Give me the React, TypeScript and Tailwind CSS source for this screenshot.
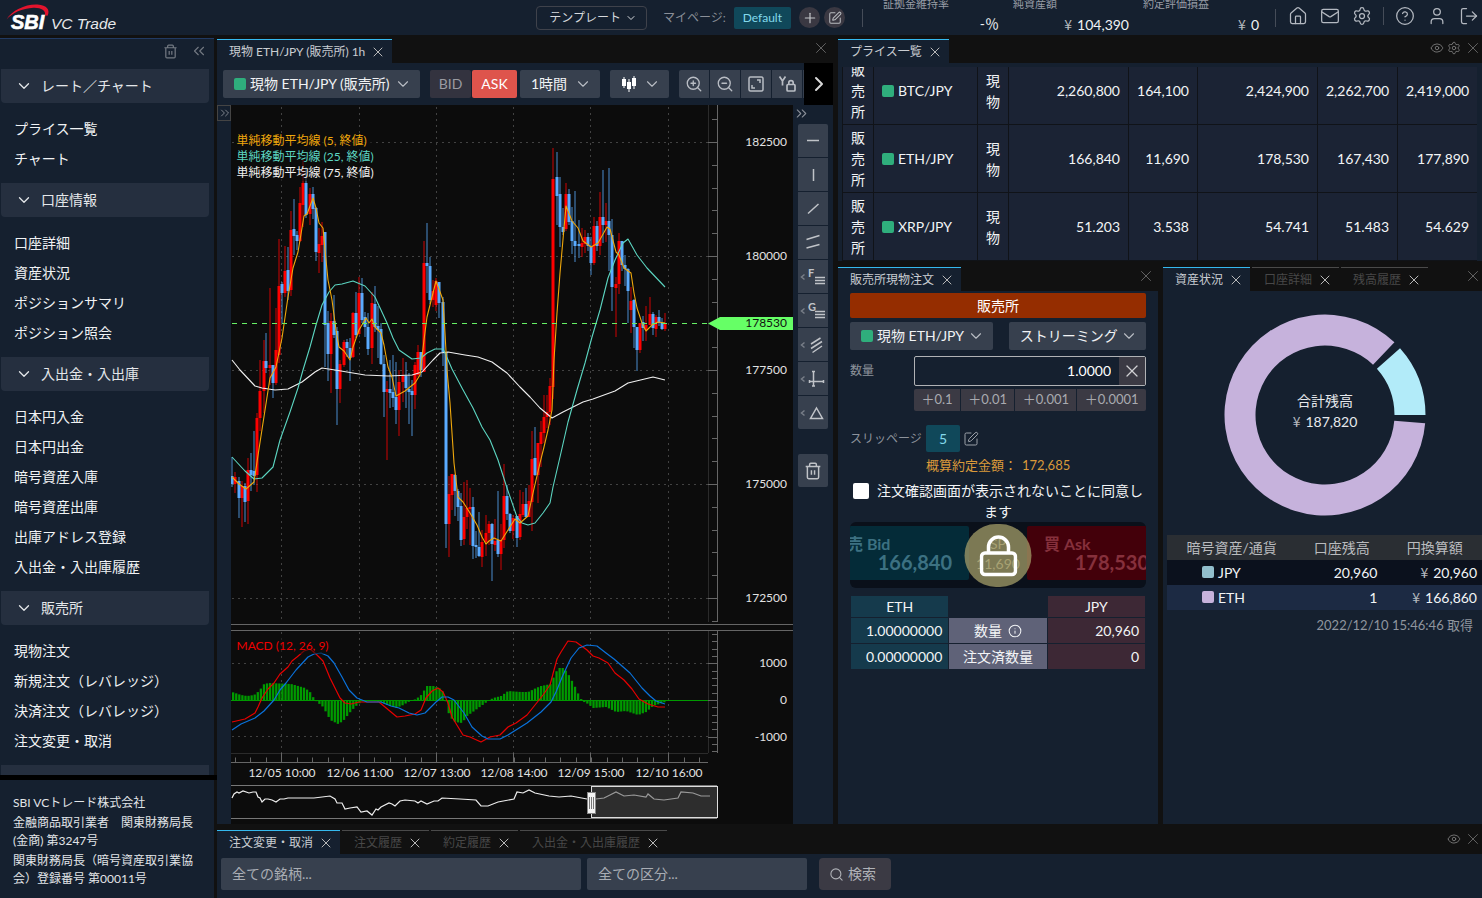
import { useState, type ReactNode } from "react";
import clsx from "clsx";
import {
  ChevronDown,
  ChevronRight,
  ChevronsLeft,
  ChevronsRight,
  CircleHelp,
  Eye,
  House,
  Info,
  LogOut,
  Mail,
  Plus,
  Search,
  Settings,
  SquarePen,
  User,
  X,
  ZoomIn,
  ZoomOut,
} from "lucide-react";

type Candle = [number, number, number, number, number];
type Point = [number, number];

// x, high, body top, body bottom, low
const UP: Candle[] = [
  [235, 472, 477, 484, 493], [242, 481, 486, 498, 527], [248, 458, 470, 501, 524], [257, 413, 418, 475, 492],
  [260, 360, 391, 418, 431], [264, 340, 361, 391, 413], [270, 288, 365, 368, 385], [276, 308, 350, 383, 385],
  [279, 239, 286, 355, 363], [285, 246, 271, 293, 297], [291, 211, 230, 290, 296], [300, 187, 203, 241, 242],
  [303, 160, 183, 205, 227], [310, 188, 194, 214, 225], [319, 228, 244, 253, 273], [322, 222, 236, 245, 262],
  [331, 313, 321, 354, 393], [340, 360, 364, 389, 403], [344, 340, 342, 365, 367], [353, 312, 313, 357, 358],
  [359, 277, 293, 334, 335], [372, 292, 303, 348, 364], [387, 381, 389, 392, 460], [399, 370, 382, 410, 436],
  [403, 358, 376, 382, 402], [415, 362, 365, 395, 409], [418, 345, 352, 375, 377], [424, 241, 263, 372, 372],
  [433, 280, 291, 300, 307], [436, 278, 281, 305, 311], [449, 476, 494, 524, 557], [452, 474, 474, 495, 510],
  [464, 482, 517, 539, 545], [467, 480, 508, 517, 529], [470, 488, 507, 509, 545], [482, 530, 542, 557, 567],
  [486, 515, 533, 542, 556], [489, 521, 524, 533, 545], [495, 519, 541, 545, 551], [501, 524, 540, 554, 570],
  [504, 464, 496, 540, 548], [513, 515, 518, 531, 539], [520, 490, 514, 537, 540], [523, 492, 504, 515, 517],
  [529, 485, 501, 517, 517], [532, 431, 459, 502, 531], [538, 443, 443, 475, 503], [541, 421, 432, 444, 467],
  [544, 395, 417, 433, 443], [547, 395, 412, 417, 428], [550, 378, 386, 412, 425], [553, 148, 179, 387, 399],
  [566, 183, 194, 229, 231], [582, 228, 243, 247, 257], [585, 230, 237, 244, 253], [594, 217, 226, 263, 265],
  [600, 192, 217, 246, 255], [606, 203, 221, 225, 242], [616, 277, 284, 288, 337], [619, 233, 241, 284, 294],
  [631, 287, 301, 310, 333], [640, 323, 323, 350, 353], [646, 306, 325, 330, 341], [650, 297, 314, 325, 325],
  [656, 315, 317, 329, 337], [665, 313, 323, 329, 331],
];

const DOWN: Candle[] = [
  [232, 457, 476, 484, 487], [239, 477, 481, 498, 518], [245, 483, 486, 502, 522], [251, 453, 470, 475, 491],
  [254, 431, 471, 476, 485], [266, 333, 361, 368, 373], [273, 365, 365, 383, 398], [282, 282, 284, 293, 323],
  [288, 247, 270, 291, 300], [294, 199, 229, 236, 255], [297, 231, 235, 241, 250], [306, 167, 183, 215, 218],
  [313, 187, 194, 209, 219], [316, 207, 208, 252, 261], [325, 232, 232, 325, 367], [328, 311, 323, 354, 381],
  [334, 295, 321, 335, 338], [337, 327, 331, 389, 425], [347, 339, 342, 348, 357], [350, 338, 348, 358, 381],
  [356, 292, 313, 335, 338], [362, 278, 293, 320, 323], [365, 312, 317, 327, 337], [368, 313, 327, 349, 355],
  [375, 286, 304, 327, 332], [378, 306, 326, 330, 358], [381, 323, 329, 364, 365], [384, 355, 364, 392, 417],
  [390, 360, 389, 393, 408], [393, 355, 392, 398, 407], [396, 362, 397, 410, 424], [406, 362, 376, 388, 408],
  [409, 373, 389, 392, 424], [412, 380, 391, 395, 436], [421, 352, 352, 370, 377], [427, 223, 263, 266, 293],
  [430, 257, 266, 300, 304], [439, 282, 282, 303, 318], [443, 297, 302, 352, 366], [446, 352, 352, 524, 548],
  [455, 474, 475, 491, 516], [458, 489, 491, 507, 521], [461, 493, 506, 540, 546], [473, 497, 507, 546, 559],
  [476, 531, 545, 547, 558], [479, 512, 547, 556, 557], [492, 523, 524, 544, 581], [498, 491, 540, 554, 557],
  [507, 485, 496, 514, 520], [510, 513, 514, 531, 533], [517, 516, 516, 538, 547], [526, 488, 504, 517, 517],
  [535, 427, 458, 475, 476], [557, 152, 177, 196, 225], [560, 177, 194, 227, 247], [563, 208, 227, 232, 235],
  [569, 189, 194, 222, 225], [572, 207, 221, 241, 254], [575, 191, 241, 246, 262], [579, 220, 244, 246, 258],
  [588, 233, 237, 246, 251], [591, 237, 246, 263, 275], [597, 221, 226, 246, 251], [603, 170, 217, 225, 243],
  [609, 168, 221, 235, 271], [612, 219, 235, 287, 311], [622, 241, 241, 265, 271], [625, 255, 265, 269, 286],
  [628, 268, 269, 291, 323], [634, 299, 300, 327, 348], [637, 327, 327, 350, 371], [643, 316, 322, 328, 341],
  [653, 312, 314, 328, 335], [659, 310, 317, 323, 326], [662, 318, 323, 329, 330],
];

const MA5 =
  "232,477 239,484 246,489 254,482 257,462 263,423 270,378 276,367 282,338 288,297 293,268 298,252 304,216 307,214 313,198 316,208 319,223 323,228 325,250 328,280 332,300 336,330 339,347 344,351 350,360 353,347 359,330 366,318 369,323 372,319 375,327 381,333 384,345 388,367 392,377 396,396 405,391 415,383 420,375 424,340 427,317 436,281 443,300 445,333 447,370 450,403 454,463 458,497 463,502 470,513 477,525 482,537 486,544 489,541 494,538 501,541 508,530 515,519 520,523 528,516 533,493 540,463 544,447 548,430 552,410 554,360 557,313 560,273 566,206 572,221 578,228 583,241 591,247 598,243 602,236 607,227 610,229 616,252 619,255 624,268 631,273 634,293 637,308 642,323 646,331 652,325 658,322 665,323";
const MA25 =
  "232,457 245,471 254,479 262,478 273,467 280,440 290,412 298,388 303,370 310,347 316,325 322,305 329,292 335,285 342,284 353,281 365,286 375,297 381,310 387,323 393,338 399,350 412,359 421,358 427,353 435,349 443,349 445,353 452,369 462,388 473,408 482,427 490,440 498,460 507,488 517,517 522,523 528,525 535,523 543,513 550,503 553,487 560,457 568,422 577,390 585,363 592,337 600,310 608,278 615,260 623,243 628,239 637,255 647,268 665,287";
const MA75 =
  "232,360 240,370 255,386 262,388 275,390 288,389 302,382 315,372 322,368 335,370 365,375 388,376 412,375 422,372 433,360 440,353 448,352 465,355 478,357 492,362 507,373 520,387 530,397 540,408 552,418 563,412 573,407 583,402 593,399 615,391 628,383 653,377 665,380";
const MACD_LINE =
  "232,722 245,719 255,713 258,707 262,698 268,689 274,683 280,674 288,667 292,661 297,657 304,651 310,649 316,654 323,661 330,678 334,686 340,698 345,703 351,704 359,702 379,702 385,707 391,712 397,717 405,716 415,714 421,710 426,698 432,691 438,688 443,692 448,703 452,717 463,735 470,737 481,742 490,737 500,735 508,727 516,723 527,715 535,705 543,695 550,685 554,670 557,659 561,652 568,641 576,642 587,650 593,656 599,658 608,663 615,673 624,680 632,689 639,699 648,704 658,707 665,707";
const SIGNAL_LINE =
  "232,730 241,724 255,718 264,711 274,700 280,690 286,683 296,670 308,657 314,654 321,653 328,656 334,663 342,677 349,690 357,698 367,702 381,702 391,706 399,708 409,713 417,715 425,713 436,702 442,697 448,697 454,700 464,713 472,727 482,736 488,739 500,739 508,735 527,723 541,712 551,702 556,692 563,675 571,658 579,648 587,645 597,646 606,653 614,659 630,673 642,688 650,696 656,701 665,704";
const OVERVIEW =
  "232,798 234,794 237,792 239,793 243,791 249,793 253,792 256,792 258,797 260,798 262,802 265,799 268,799 272,800 276,802 280,799 284,799 288,798 314,798 330,796 335,799 337,803 342,803 345,809 350,808 357,807 361,812 367,811 372,815 376,809 378,810 381,807 389,803 392,804 395,806 400,801 405,800 415,801 418,803 421,801 427,804 434,801 438,801 442,798 460,799 476,800 481,806 488,806 498,802 514,799 517,792 523,793 529,790 535,793 549,796 559,797 571,796 587,799";
const OVERVIEW_SELECTED =
  "596,799 604,798 610,795 616,792 624,796 634,795 646,797 648,794 654,799 664,800 678,798 681,792 693,793 701,796 710,796";

// x, bar height above (+) or below (-) zero
const HISTOGRAM: Point[] = [
  [231, 8], [240, 5], [246, 4], [253, 5], [258, 9], [263, 16], [268, 17], [290, 16], [304, 12], [310, 7], [313, 1],
  [316, -2], [322, -7], [327, -16], [329, -20], [337, -24], [342, -21], [350, -11], [357, -4], [362, -1], [372, -1],
  [380, -2], [386, -5], [395, -8], [402, -5], [407, -2], [415, 1], [420, 5], [426, 14], [432, 14], [438, 12],
  [442, 8], [445, -3], [447, -12], [450, -18], [454, -22], [461, -23], [466, -16], [473, -11], [480, -6], [487, -1],
  [492, 2], [500, 4], [507, 9], [520, 8], [527, 8], [535, 12], [540, 14], [550, 16], [554, 27], [558, 32], [562, 32],
  [566, 28], [572, 17], [575, 11], [579, 2], [583, -2], [587, -4], [592, -8], [605, -7], [611, -10], [615, -12],
  [625, -11], [637, -15], [645, -12], [652, -6], [658, -4], [664, -2], [668, -1],
];

function histogramAt(x: number) {
  const next = HISTOGRAM.findIndex((p) => p[0] > x);
  const [x0, y0] = HISTOGRAM[next - 1];
  const [x1, y1] = HISTOGRAM[next];
  return y0 + ((y1 - y0) * (x - x0)) / (x1 - x0);
}

const DAYS: [number, string][] = [
  [281.5, "12/05 10:00"],
  [359.5, "12/06 11:00"],
  [436.5, "12/07 13:00"],
  [513.5, "12/08 14:00"],
  [590.5, "12/09 15:00"],
  [668.5, "12/10 16:00"],
];

const PRICES: [number, string][] = [
  [142, "182500"],
  [256, "180000"],
  [370, "177500"],
  [484, "175000"],
  [598, "172500"],
];

const range = (n: number) => Array.from({ length: n }, (_, i) => i);

function TrashIcon({ size }: { size: number }) {
  return (
    <svg width={size} height={size} viewBox="0 0 16 16" fill="none" stroke="currentColor" strokeWidth="1.3">
      <path d="M1.500 4h13M5 4V2.200a1 1 0 0 1 1-1h4a1 1 0 0 1 1 1V4M3 4v9.600a1.200 1.200 0 0 0 1.200 1.200h7.600a1.200 1.200 0 0 0 1.200-1.200V4M6.600 7.400v4M9.400 7.400v4" />
    </svg>
  );
}

function Swatch({ className }: { className: string }) {
  return <span className={clsx("inline-block size-3 shrink-0 rounded-xs", className)} />;
}

function Yen({ children }: { children: ReactNode }) {
  return (
    <span className="whitespace-nowrap">
      <span className="mr-[5px] font-['Noto_Sans_CJK_JP',sans-serif] text-[#b4b8be]">¥</span>
      {children}
    </span>
  );
}

function Tab({ label, active = false }: { label: string; active?: boolean }) {
  return (
    <div
      className={clsx(
        "flex h-6 items-center gap-2 border-t pt-px pr-[9px] pl-3 text-xs whitespace-nowrap",
        active ? "border-[#35b9ee] bg-[#15202f] text-[#c9cdd2]" : "border-[#4a4a4a] text-[#484848]",
      )}
    >
      <button>{label}</button>
      <button aria-label={`${label} 閉じる`} className="-mx-[3px] text-[#b8b8b8]">
        <X size={16} strokeWidth={1.5} />
      </button>
    </div>
  );
}

function TabStrip({ children, tools, inset }: { children: ReactNode; tools?: ReactNode; inset?: boolean }) {
  return (
    <div className={clsx("flex h-6 shrink-0 items-center gap-[2px] bg-[#111]", inset && "pr-[3px]")}>
      {children}
      <div className="mb-[7px] ml-auto flex items-center gap-[3px] text-[#7c7c7c]">
        {tools}
        <button aria-label="パネルを閉じる">
          <X size={18} strokeWidth={1} />
        </button>
      </div>
    </div>
  );
}

function Dropdown({ label, value, swatch, className }: { label: string; value: string; swatch?: boolean; className?: string }) {
  return (
    <div className={clsx("relative flex h-7 shrink-0 items-center gap-1 rounded-xs bg-[#37404e] pb-px pl-[11px] text-sm text-[#f0f2f4]", className)}>
      {swatch && <Swatch className="bg-[#2fae7c]" />}
      <select aria-label={label} className="h-full min-w-0 flex-1 appearance-none truncate bg-transparent outline-none">
        <option>{value}</option>
      </select>
      <ChevronDown size={18} strokeWidth={1.5} className="pointer-events-none absolute right-2 text-[#b9bdc4]" />
    </div>
  );
}

function Logo() {
  return (
    <svg width="122" height="35" viewBox="0 0 122 35" role="img" aria-label="SBI VC Trade">
      <path d="M6.500 19.500C12 10 26 3.800 37.500 4.500C47 5.200 50.500 10 47.500 15.800L45 15.200C46 10.500 41 7.500 33.500 7.800C22 8.300 12.500 13 6.500 19.500Z" fill="#e3142d" />
      <text x="11" y="29" fontSize="20" fontWeight="700" fontStyle="italic" fontFamily="Liberation Sans, sans-serif" fill="#fff" stroke="#fff" strokeWidth=".6">
        SBI
      </text>
      <text x="51" y="29" fontSize="15.500" fontStyle="italic" fontFamily="Liberation Sans, sans-serif" fill="#e6e8ea">
        VC Trade
      </text>
    </svg>
  );
}

const STATS: [string, ReactNode][] = [
  ["証拠金維持率", "-％"],
  ["純資産額", <Yen key="a">104,390</Yen>],
  ["約定評価損益", <Yen key="b">0</Yen>],
];

function Header() {
  return (
    <header className="flex h-[35px] shrink-0 items-center justify-between overflow-hidden bg-[#15202f]">
      <Logo />
      <div className="flex items-center">
        <button className="flex h-6 items-center gap-1 rounded-sm border border-[#3f424b] pr-[9px] pl-3 text-xs text-[#d6d9dd]">
          テンプレート
          <ChevronDown size={12} />
        </button>
        <span className="ml-4 text-xs text-[#8a8f98]">マイページ:</span>
        <button className="ml-2 h-[22px] rounded-xs bg-[#10485a] px-[9px] text-xs text-[#83d9ec]">Default</button>
        <button aria-label="追加" className="ml-2 grid size-[21px] place-items-center rounded-full bg-[#3a3842] text-[#c4c6ca]">
          <Plus size={16} strokeWidth={1.75} />
        </button>
        <button aria-label="編集" className="ml-1 grid size-[21px] place-items-center rounded-full bg-[#3a3842] text-[#b9bbc0]">
          <SquarePen size={14} strokeWidth={1.75} />
        </button>
        <span className="mr-5 ml-[17px] h-[18px] w-px bg-[#454c58]" />
        <dl className="-mt-[6px] flex gap-[14px]">
          {STATS.map(([label, value]) => (
            <div key={label} className="w-[116px]">
              <dt className="text-[11px] leading-5 text-[#989da6]">{label}</dt>
              <dd className="text-right text-sm leading-5 text-[#f0f2f4]">{value}</dd>
            </div>
          ))}
        </dl>
        <span className="mr-3 ml-4 h-[18px] w-px bg-[#454c58]" />
        <nav className="mb-1 flex items-center gap-3 pr-[3px] text-[#b4b9c1]">
          <button aria-label="ホーム"><House size={20} strokeWidth={1.5} /></button>
          <button aria-label="メッセージ"><Mail size={20} strokeWidth={1.5} /></button>
          <button aria-label="設定"><Settings size={20} strokeWidth={1.5} /></button>
          <span className="-mx-px h-[18px] w-px bg-[#454c58]" />
          <button aria-label="ヘルプ"><CircleHelp size={20} strokeWidth={1.5} /></button>
          <button aria-label="アカウント"><User size={20} strokeWidth={1.5} /></button>
          <button aria-label="ログアウト"><LogOut size={20} strokeWidth={1.5} /></button>
        </nav>
      </div>
    </header>
  );
}

const MENU: { title: string; items: string[] }[] = [
  { title: "レート／チャート", items: ["プライス一覧", "チャート"] },
  { title: "口座情報", items: ["口座詳細", "資産状況", "ポジションサマリ", "ポジション照会"] },
  { title: "入出金・入出庫", items: ["日本円入金", "日本円出金", "暗号資産入庫", "暗号資産出庫", "出庫アドレス登録", "入出金・入出庫履歴"] },
  { title: "販売所", items: ["現物注文", "新規注文（レバレッジ）", "決済注文（レバレッジ）", "注文変更・取消"] },
  { title: "", items: [] },
];

function Sidebar() {
  return (
    <aside className="flex w-[217px] shrink-0 flex-col pt-[3px]">
      <div className="mr-[3px] min-h-0 flex-1 overflow-hidden border-t border-[#213a63] bg-[#15202f]">
        <div className="flex h-[30px] items-center justify-end gap-3 pr-[6px] pb-[6px] text-[#737982]">
          <button aria-label="削除"><TrashIcon size={15} /></button>
          <button aria-label="メニューを閉じる"><ChevronsLeft size={18} strokeWidth={1.5} /></button>
        </div>
        {MENU.map((group, i) => (
          <section key={i}>
            <button className="mr-[5px] ml-px flex h-[34px] w-[208px] items-center gap-2 rounded-b-sm bg-[#252f3f] pl-[14px] text-sm text-[#e4e7ea]">
              <ChevronDown size={18} strokeWidth={1.75} />
              {group.title}
            </button>
            <ul className="pt-[11px] pb-[9px] pl-[14px] text-sm text-[#f0f2f4]">
              {group.items.map((item) => (
                <li key={item} className="h-[30px] leading-[30px]">
                  <a href="#">{item}</a>
                </li>
              ))}
            </ul>
          </section>
        ))}
      </div>
      <div className="h-[5px] shrink-0 bg-black" />
      <footer className="mr-[3px] flex h-[118px] shrink-0 flex-col gap-[2px] bg-[#15202f] px-[13px] pt-[14px] text-xs leading-[18px] text-[#e2e5e8]">
        <p>SBI VCトレード株式会社</p>
        <p>金融商品取引業者　関東財務局長(金商) 第3247号</p>
        <p>関東財務局長（暗号資産取引業協会）登録番号 第00011号</p>
      </footer>
    </aside>
  );
}

function Candles({ data, color }: { data: Candle[]; color: string }) {
  return (
    <g fill={color}>
      {data.map(([x, high, top, bottom, low]) => (
        <g key={x}>
          <rect x={x - 0.5} y={high} width="1" height={low - high} opacity=".8" />
          <rect x={x - 1.5} y={top} width="3" height={Math.max(bottom - top, 1)} />
        </g>
      ))}
    </g>
  );
}

function PriceChart() {
  return (
    <svg viewBox="231 105 562 719" className="block h-full w-full" fontFamily="Lato, 'Noto Sans CJK JP', sans-serif" fontSize="12">
      <g stroke="#424242" strokeDasharray="2 4">
        {DAYS.map(([x]) => (
          <g key={x}>
            <path d={`M${x} 107V622`} />
            <path d={`M${x} 632V753`} />
          </g>
        ))}
        {PRICES.map(([y]) => <path key={y} d={`M232 ${y + 0.5}H708`} />)}
        <path d="M232 663.500H708M232 736.500H708" />
      </g>

      {/* axes */}
      <g stroke="#2b2b2b">
        <path d="M708.500 105V622M708.500 631V753M231 753.500H708" />
      </g>
      <g stroke="#666">
        <path d="M717.500 105V622M717.500 631V753M231 762.500H708M231 624.500H793M231 630.500H793" />
        {range(23).map((i) => (
          <path key={i} d={`M${(i - 1) % 5 === 0 ? 708 : 712} ${Math.round(119.200 + i * 22.800) + 0.5}H717`} />
        ))}
        {range(17).map((i) => (
          <path key={i} d={`M${i === 4 || i === 9 || i === 14 ? 708 : 712} ${Math.round(634 + i * 7.33) + 0.5}H717`} />
        ))}
        {range(31).map((i) => (
          <path key={i} d={`M${Math.round(235 + i * 15.480) + 0.5} 757.500V762`} />
        ))}
        {DAYS.map(([x]) => <path key={x} d={`M${x} 753V762`} />)}
      </g>
      <g fill="#e2e2e2">
        {PRICES.map(([y, label]) => <text key={y} x="787" y={y + 4} textAnchor="end">{label}</text>)}
        <text x="787" y="667" textAnchor="end">1000</text>
        <text x="787" y="704" textAnchor="end">0</text>
        <text x="787" y="741" textAnchor="end">-1000</text>
        {DAYS.map(([x, label]) => <text key={x} x={x + 0.5} y="777" textAnchor="middle">{label}</text>)}
      </g>

      <Candles data={UP} color="#ff0000" />
      <Candles data={DOWN} color="#5aabff" />
      <g fill="none" strokeWidth="1.1" strokeLinejoin="round">
        <polyline points={MA75} stroke="#f0f0f0" />
        <polyline points={MA25} stroke="#5cd6c2" />
        <polyline points={MA5} stroke="#f0a80c" />
      </g>
      <path d="M232 323.500H708" stroke="#66f066" strokeDasharray="5 5" />
      <path d="M708 323.500L720 317H793V330H720Z" fill="#66ff66" />
      <text x="787" y="327" textAnchor="end" fill="#111">178530</text>

      {/* macd */}
      <g fill="#009a00">
        {range(141).map((i) => {
          const x = 232 + i * 3.08;
          const h = histogramAt(x);
          return <rect key={i} x={x} y={h > 0 ? 700 - h : 700} width="2.300" height={Math.abs(h)} />;
        })}
      </g>
      <path d="M231 700.500H708" stroke="#009a00" />
      <g fill="none" strokeWidth="1.2" strokeLinejoin="round">
        <polyline points={MACD_LINE} stroke="#e80000" />
        <polyline points={SIGNAL_LINE} stroke="#0a72dc" />
      </g>

      {/* indicator captions */}
      <rect x="235" y="133" width="139" height="48" fill="#0c0c0c" opacity=".55" />
      <text x="236.500" y="145" fill="#f0a80c">単純移動平均線 (5, 終値)</text>
      <text x="236.500" y="161" fill="#5cd6c2">単純移動平均線 (25, 終値)</text>
      <text x="236.500" y="177" fill="#f0f0f0">単純移動平均線 (75, 終値)</text>
      <rect x="235" y="637" width="93" height="17" fill="#0c0c0c" opacity=".55" />
      <text x="236.500" y="650" fill="#ee0000">MACD (12, 26, 9)</text>

      {/* range navigator */}
      <path d="M231 785.500H717M231 818.500H717" stroke="#777" />
      <polyline points={OVERVIEW} fill="none" stroke="#eee" strokeWidth="1.2" />
      <rect x="591.500" y="786.500" width="126" height="31" fill="#2d2d2d" stroke="#ddd" />
      <polyline points={OVERVIEW_SELECTED} fill="none" stroke="#9a9a9a" strokeWidth="1.2" />
      <rect x="587.500" y="792.500" width="8" height="21" fill="#f4f4f4" stroke="#888" />
      <path d="M589.500 797V809M591.500 797V809M593.500 797V809" stroke="#777" />
    </svg>
  );
}

const DRAW_TOOLS: { name: string; more: boolean; icon: ReactNode }[] = [
  { name: "水平線", more: false, icon: <path d="M9 16.500H21" /> },
  { name: "垂直線", more: false, icon: <path d="M15.500 11V23" /> },
  { name: "トレンドライン", more: false, icon: <path d="M10 21.500L20.500 12" /> },
  { name: "チャネルライン", more: false, icon: <path d="M8.500 13.500L21.500 9.500M8.500 22L21.500 18.500" /> },
  {
    name: "フィボナッチ",
    more: true,
    icon: (
      <>
        <text x="10" y="17" fontSize="11" fontWeight="700" fill="currentColor" stroke="none">F</text>
        <path d="M17 17.500H27M17 20.500H27M17 23.500H27" />
      </>
    ),
  },
  {
    name: "ギャン",
    more: true,
    icon: (
      <>
        <text x="10" y="17" fontSize="11" fontWeight="700" fill="currentColor" stroke="none">G</text>
        <path d="M17 17.500H27M17 20.500H27M17 23.500H27" />
      </>
    ),
  },
  { name: "平行線", more: true, icon: <path d="M13 16L22.500 10M13 20.500L24 13.500M14.500 24.500L24 18" /> },
  { name: "計測", more: true, icon: <path d="M15.500 9V24M14 9.500H17M14 24H17M11 19.500H26M11.500 18V21M25.500 18V21" /> },
  { name: "図形", more: true, icon: <path d="M18.500 12L24.500 22.500H12.500Z" /> },
];

function DrawTools() {
  return (
    <div className="flex w-10 shrink-0 flex-col items-center bg-[#15202f]">
      <button aria-label="描画ツールを閉じる" className="mb-1 h-[15px] self-start text-[#8b9099]">
        <ChevronsRight size={17} strokeWidth={1.5} />
      </button>
      <div className="flex flex-col gap-px overflow-hidden rounded-xs">
        {DRAW_TOOLS.map((tool) => (
          <button key={tool.name} aria-label={tool.name} className="bg-[#37404e] text-[#c0c3c8]">
            <svg width="30" height="33" viewBox="0 0 30 33" fill="none" stroke="currentColor" strokeWidth="1.500">
              {tool.more && <path d="M6.500 14.500L3.500 17L6.500 19.500" stroke="#777d87" />}
              {tool.icon}
            </svg>
          </button>
        ))}
      </div>
      <button aria-label="描画を削除" className="mt-[25px] grid h-[33px] w-[30px] place-items-center rounded-xs bg-[#37404e] text-[#c0c3c8]">
        <TrashIcon size={18} />
      </button>
    </div>
  );
}

function ChartPanel() {
  const [side, setSide] = useState<"BID" | "ASK">("ASK");
  const tool = "grid h-7 w-[30px] place-items-center bg-[#37404e] text-[#b9bdc4]";
  return (
    <section className="row-span-2 flex min-h-0 min-w-0 flex-col">
      <TabStrip inset>
        <Tab label="現物 ETH/JPY (販売所) 1h" active />
      </TabStrip>
      <div className="relative flex h-[42px] shrink-0 items-center overflow-hidden bg-[#15202f] pl-[6px]">
        <Dropdown label="銘柄" value="現物 ETH/JPY (販売所)" swatch className="w-[197px]" />
        <div className="ml-[10px] flex gap-px text-sm">
          {(["BID", "ASK"] as const).map((s) => (
            <button
              key={s}
              onClick={() => setSide(s)}
              className={clsx("h-7 rounded-xs", s === "BID" ? "w-[41px]" : "w-[45px]", s === side ? "bg-[#de544c] text-white" : "bg-[#33333f] text-[#9a9ba2]")}
            >
              {s}
            </button>
          ))}
        </div>
        <Dropdown label="足種" value="1時間" className="ml-[3px] w-20" />
        <button aria-label="チャート種別" className="ml-[10px] flex h-7 w-[59px] shrink-0 items-center justify-between rounded-xs bg-[#37404e] pr-2 pl-3">
          <svg width="14" height="16" viewBox="0 0 14 16" fill="#fff" stroke="#fff">
            <path d="M2 1V12M7 3V16M12 0V13" />
            <rect x="0.500" y="3.500" width="3" height="6" />
            <rect x="5.500" y="6.500" width="3" height="6" />
            <rect x="10.500" y="2.500" width="3" height="7" />
          </svg>
          <ChevronDown size={18} strokeWidth={1.5} className="text-[#b9bdc4]" />
        </button>
        <div className="ml-[10px] flex shrink-0 gap-px overflow-hidden rounded-l-xs">
          <button aria-label="拡大" className={tool}><ZoomIn size={18} strokeWidth={1.75} /></button>
          <button aria-label="縮小" className={tool}><ZoomOut size={18} strokeWidth={1.75} /></button>
          <button aria-label="全体表示" className={tool}>
            <svg width="16" height="16" viewBox="0 0 16 16" fill="none" stroke="currentColor" strokeWidth="1.500">
              <rect x="1" y="1" width="14" height="14" rx="1.500" />
              <path d="M9 4h3v3M4 9v3h3" />
            </svg>
          </button>
          <button aria-label="Y軸固定" className={tool}>
            <svg width="18" height="18" viewBox="0 0 18 18" fill="none" stroke="currentColor" strokeWidth="1.700">
              <path d="M1.500 1.500L4.500 6L7.500 1.500M4.500 6V10.500" />
              <rect x="9" y="9.500" width="8" height="6.500" rx="1" />
              <path d="M10.800 9.500V7.800a2.200 2.200 0 0 1 4.400 0v1.700" />
            </svg>
          </button>
          <span className={tool} />
        </div>
        <button aria-label="次へ" className="absolute inset-y-0 right-0 grid w-[29px] place-items-center bg-black text-[#d8d8d8]">
          <ChevronRight size={24} strokeWidth={2} />
        </button>
      </div>
      <div className="flex min-h-0 flex-1">
        <div className="w-[14px] shrink-0 bg-[#15202f]">
          <button aria-label="パネルを開く" className="grid h-4 w-[14px] place-items-center border border-[#444] text-[#8b9099]">
            <ChevronsRight size={14} strokeWidth={1.5} />
          </button>
        </div>
        <div className="min-h-0 min-w-0 flex-1 bg-[#0c0c0c]">
          <PriceChart />
        </div>
        <DrawTools />
      </div>
    </section>
  );
}

const RATES = [
  ["BTC/JPY", "2,260,800", "164,100", "2,424,900", "2,262,700", "2,419,000"],
  ["ETH/JPY", "166,840", "11,690", "178,530", "167,430", "177,890"],
  ["XRP/JPY", "51.203", "3.538", "54.741", "51.483", "54.629"],
];

function PriceListPanel() {
  return (
    <section className="col-span-2 flex min-h-0 flex-col">
      <TabStrip
        tools={
          <>
            <button aria-label="表示"><Eye size={14} strokeWidth={1.5} /></button>
            <button aria-label="設定"><Settings size={14} strokeWidth={1.5} /></button>
          </>
        }
      >
        <Tab label="プライス一覧" active />
      </TabStrip>
      <div className="flex h-[198px] flex-col bg-[#15202f] pt-1 pr-[5px] pl-1">
        {/* scrolled to the last row, so the first one is cut */}
        <div className="flex min-h-0 flex-1 flex-col justify-end overflow-hidden">
          <table className="w-full table-fixed border-separate border-spacing-0 bg-[#1b2334] text-sm leading-[21px] text-[#f2f4f6]">
            <colgroup>
              <col className="w-[31px]" />
              <col className="w-[104px]" />
              <col className="w-[31px]" />
              <col className="w-[120px]" />
              <col className="w-[69px]" />
              <col className="w-[120px]" />
              <col className="w-[80px]" />
              <col className="w-[80px]" />
            </colgroup>
            <tbody>
              {RATES.map(([pair, ...values]) => (
                <tr key={pair} className="h-[68px] *:border-b *:border-l *:border-[#101318] *:px-2">
                  <td>販売所</td>
                  <td>
                    <span className="flex items-center gap-1">
                      <Swatch className="bg-[#2fae7c]" />
                      {pair}
                    </span>
                  </td>
                  <td>現物</td>
                  {values.map((v, i) => (
                    <td key={i} className="text-right">{v}</td>
                  ))}
                </tr>
              ))}
            </tbody>
          </table>
        </div>
      </div>
    </section>
  );
}

function OrderPanel() {
  const [amount, setAmount] = useState("1.0000");
  const label = "text-xs text-[#8d939c]";
  return (
    <section className="flex min-h-0 min-w-0 flex-col">
      <TabStrip inset>
        <Tab label="販売所現物注文" active />
      </TabStrip>
      <div className="flex-1 bg-[#15202f] px-3 pt-[2px]">
        <h2 className="h-[25px] rounded-xs bg-[#952d00] text-center text-sm leading-[25px] text-white">販売所</h2>
        <div className="mt-1 flex justify-between gap-4">
          <Dropdown label="注文銘柄" value="現物 ETH/JPY" swatch className="flex-[143]" />
          <Dropdown label="注文方法" value="ストリーミング" className="flex-[137]" />
        </div>

        <div className="mt-[6px] grid grid-cols-[64px_1fr] items-center gap-y-[3px]">
          <label htmlFor="amount" className={label}>数量</label>
          <div className="flex h-[30px] rounded-xs border border-[#b0b2b5]">
            <input
              id="amount"
              value={amount}
              onChange={(e) => setAmount(e.target.value)}
              className="min-w-0 flex-1 bg-transparent pr-2 text-right text-sm text-white outline-none"
            />
            <button aria-label="クリア" onClick={() => setAmount("")} className="grid w-[26px] place-items-center bg-[#3b3a44] text-[#cfd0d3]">
              <X size={20} strokeWidth={1.5} />
            </button>
          </div>
          <div className="col-start-2 flex gap-px overflow-hidden rounded-xs text-[13px] text-[#a9aab0]">
            {["0.1", "0.01", "0.001", "0.0001"].map((step) => (
              <button key={step} className="h-[22px] flex-auto bg-[#3b3a44] whitespace-nowrap">＋{step}</button>
            ))}
          </div>
        </div>

        <div className="mt-[14px] flex items-center">
          <span className={clsx(label, "w-[76px]")}>スリッページ</span>
          <button className="h-[27px] w-[34px] rounded-xs bg-[#10485a] text-sm text-[#83d9ec]">5</button>
          <button aria-label="スリッページ編集" className="ml-[3px] text-[#9da2aa]"><SquarePen size={16} strokeWidth={1.5} /></button>
        </div>
        <p className="mt-1 pl-[76px] text-[13px] leading-[19px] text-[#d9993a]">
          概算約定金額：<span className="ml-[5px]">172,685</span>
        </p>
        <label className="mt-[5px] block text-center text-sm leading-[21px] text-[#f2f4f6]">
          <input type="checkbox" className="mr-2 size-4 appearance-none rounded-xs bg-white align-[-3px] checked:bg-[#35b9ee]" />
          注文確認画面が表示されないことに同意します
        </label>

        <div className="relative flex h-[66px] justify-center overflow-hidden rounded-md bg-[#0a101a] pt-1 font-bold">
          <button className="flex h-[54px] w-[132px] shrink-0 flex-col rounded-xs bg-[#042b38] pt-[9px] pr-[17px] pl-[10px] text-[#3c7182]">
            <span className="self-start text-base leading-[18px]">売 Bid</span>
            <span className="self-end text-xl leading-[18px]">166,840</span>
          </button>
          <div className="w-[58px] shrink-0 pt-2 text-center text-sm leading-5 font-normal text-[#b5b293]">
            SP
            <br />
            11,690
          </div>
          <button className="flex h-[54px] w-[132px] shrink-0 flex-col rounded-xs bg-[#43000a] pt-[9px] pr-[10px] pl-[17px] text-[#86303c]">
            <span className="self-start text-base leading-[18px]">買 Ask</span>
            <span className="self-end text-xl leading-[18px]">178,530</span>
          </button>
          <button aria-label="ロック解除" className="absolute top-[2px] left-1/2 grid h-[63px] w-[67px] -translate-x-1/2 place-items-center rounded-full bg-[#a39c68]/75">
            <svg width="38" height="42" viewBox="0 0 38 42" fill="none" stroke="#fff" strokeWidth="3.500">
              <rect x="2" y="18" width="34" height="21.500" rx="3.500" />
              <path d="M9 18V12a10 10 0 0 1 20 0v6" />
            </svg>
          </button>
        </div>

        <table className="mt-[7px] w-full table-fixed border-separate border-spacing-px text-sm text-[#f2f4f6]">
          <thead>
            <tr className="h-[21px] *:p-0 *:font-normal *:leading-[21px]">
              <th className="bg-[#153a4c]">ETH</th>
              <td />
              <th className="bg-[#3d2835]">JPY</th>
            </tr>
          </thead>
          <tbody>
            <tr className="h-[25px] *:py-0">
              <td className="bg-[#153a4c] pr-[6px] text-right">1.00000000</td>
              <th className="bg-[#5f6278] font-normal">
                <span className="inline-flex items-center gap-[6px]">数量 <Info size={14} strokeWidth={1.75} /></span>
              </th>
              <td className="bg-[#3d2835] pr-[6px] text-right">20,960</td>
            </tr>
            <tr className="h-[25px] *:py-0">
              <td className="bg-[#153a4c] pr-[6px] text-right">0.00000000</td>
              <th className="bg-[#5f6278] font-normal">注文済数量</th>
              <td className="bg-[#3d2835] pr-[6px] text-right">0</td>
            </tr>
          </tbody>
        </table>
      </div>
    </section>
  );
}

// ring segment between two angles in degrees, counter-clockwise from 3 o'clock
function ringPath(from: number, to: number) {
  const at = (r: number, deg: number) => {
    const a = (deg * Math.PI) / 180;
    return `${102 + r * Math.cos(a)} ${101 - r * Math.sin(a)}`;
  };
  const large = to - from > 180 ? 1 : 0;
  return `M${at(100.5, from)}A100.5 100.5 0 ${large} 0 ${at(100.5, to)}L${at(69.5, to)}A69.5 69.5 0 ${large} 1 ${at(69.5, from)}Z`;
}

function AssetPanel() {
  return (
    <section className="flex min-h-0 min-w-0 flex-col">
      <TabStrip>
        <Tab label="資産状況" active />
        <Tab label="口座詳細" />
        <Tab label="残高履歴" />
      </TabStrip>
      <div className="flex-1 bg-[#15202f] pt-[23px] pl-1">
        <svg width="203" height="202" viewBox="0 0 203 202" className="mx-auto block">
          <path d={ringPath(0, 41.7)} fill="#b2ebf9" />
          <path d={ringPath(46.3, 355.3)} fill="#c6b2dc" />
          <g fill="#e6e8ec" fontSize="14" textAnchor="middle">
            <text x="102" y="92">合計残高</text>
            <text x="102" y="113"><tspan fontFamily="Noto Sans CJK JP, sans-serif" fill="#b4b8be">¥</tspan><tspan dx="5">187,820</tspan></text>
          </g>
        </svg>
        <table className="mt-[19px] w-full table-fixed border-collapse text-sm text-[#f2f4f6]">
          <thead>
            <tr className="h-[25px] bg-[#2a2e33] text-[#b9bbbe] *:p-0 *:font-normal">
              <th className="w-[41%]">暗号資産/通貨</th>
              <th className="w-[29%]">口座残高</th>
              <th className="w-[30%]">円換算額</th>
            </tr>
          </thead>
          <tbody>
            <tr className="h-[25px] bg-[#0b111d] *:py-0">
              <td className="pl-[35px]"><Swatch className="mr-1 bg-[#92bfcd]" />JPY</td>
              <td className="pr-[10px] text-right">20,960</td>
              <td className="pr-[5px] text-right"><Yen>20,960</Yen></td>
            </tr>
            <tr className="h-[25px] bg-[#1c2a43] *:py-0">
              <td className="pl-[35px]"><Swatch className="mr-1 bg-[#c6b2dc]" />ETH</td>
              <td className="pr-[10px] text-right">1</td>
              <td className="pr-[5px] text-right"><Yen>166,860</Yen></td>
            </tr>
          </tbody>
        </table>
        <p className="mt-[5px] pr-[9px] text-right text-[13px] leading-5 text-[#8f959e]">2022/12/10 15:46:46 取得</p>
      </div>
    </section>
  );
}

function HistoryPanel() {
  const filter = "h-8 appearance-none rounded-xs bg-[#37404e] px-[11px] text-sm text-[#a9adb4] outline-none";
  return (
    <section className="mt-[6px] shrink-0">
      <TabStrip tools={<button aria-label="表示"><Eye size={14} strokeWidth={1.5} /></button>}>
        <Tab label="注文変更・取消" active />
        <Tab label="注文履歴" />
        <Tab label="約定履歴" />
        <Tab label="入出金・入出庫履歴" />
      </TabStrip>
      <form className="flex h-11 items-start gap-[6px] bg-[#15202f] pt-1 pl-1" onSubmit={(e) => e.preventDefault()}>
        <select aria-label="銘柄" className={clsx(filter, "w-[360px]")}>
          <option>全ての銘柄...</option>
        </select>
        <select aria-label="区分" className={clsx(filter, "w-[220px]")}>
          <option>全ての区分...</option>
        </select>
        <button className="ml-[6px] flex h-8 w-[72px] items-center gap-1 rounded-sm bg-[#3b3a44] pl-[10px] text-sm text-[#b0b2b8]">
          <Search size={15} strokeWidth={1.75} />
          検索
        </button>
      </form>
    </section>
  );
}

export default function App() {
  return (
    <div className="flex h-screen flex-col overflow-hidden bg-[#111] font-['Lato','Noto_Sans_CJK_JP',sans-serif]">
      <Header />
      <div className="flex min-h-0 flex-1">
        <Sidebar />
        <main className="flex min-w-0 flex-1 flex-col pt-1">
          <div className="grid min-h-0 flex-1 grid-cols-[616fr_320fr_319fr] grid-rows-[auto_minmax(0,1fr)] gap-x-[5px] gap-y-[6px]">
            <ChartPanel />
            <PriceListPanel />
            <OrderPanel />
            <AssetPanel />
          </div>
          <HistoryPanel />
        </main>
      </div>
    </div>
  );
}
